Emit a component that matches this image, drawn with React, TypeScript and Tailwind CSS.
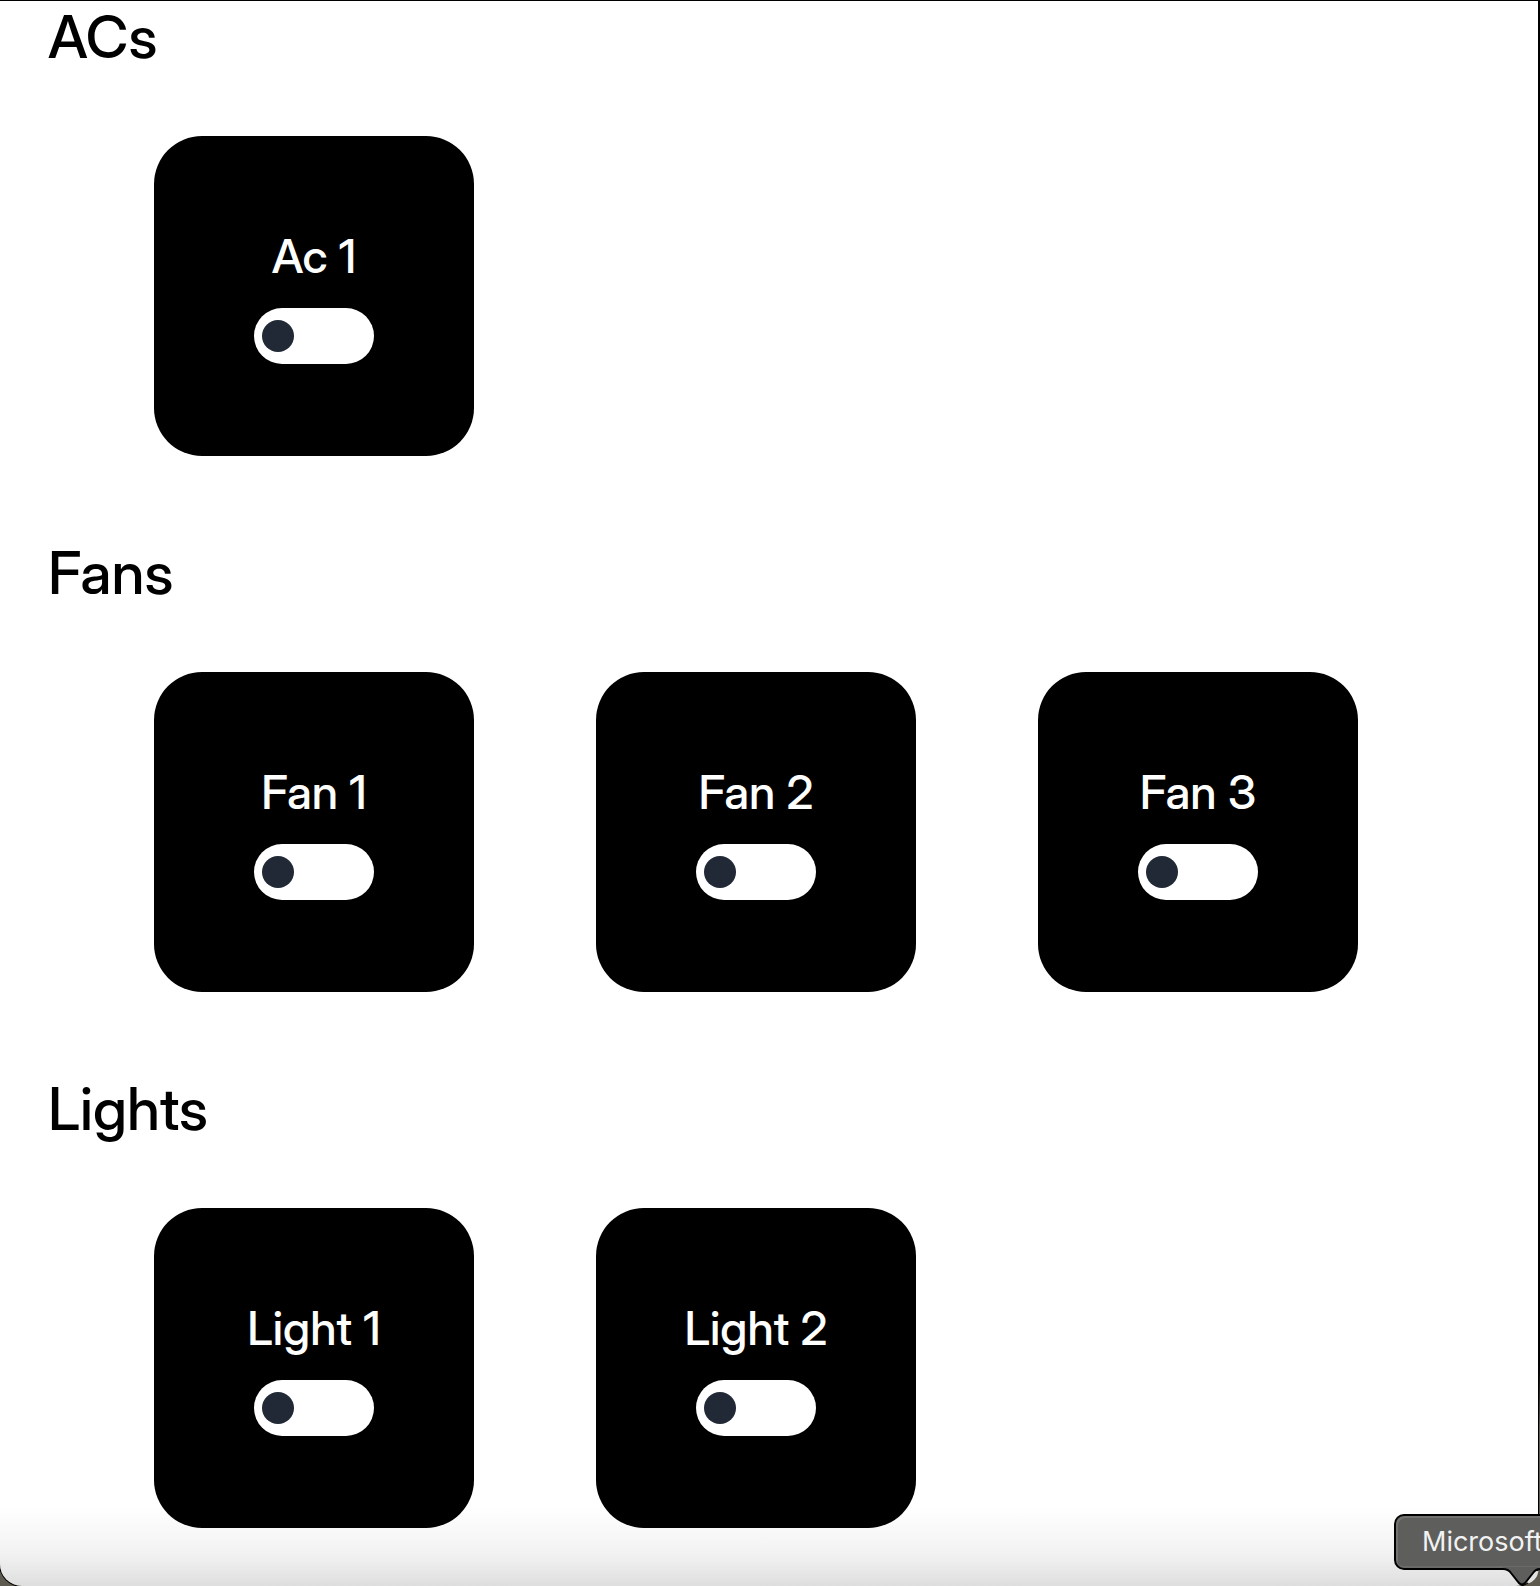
import { useState } from "react";

type Group = { title: string; devices: string[] };

const groups: Group[] = [
  { title: "ACs", devices: ["Ac 1"] },
  { title: "Fans", devices: ["Fan 1", "Fan 2", "Fan 3"] },
  { title: "Lights", devices: ["Light 1", "Light 2"] },
];

function DeviceCard({ name }: { name: string }) {
  const [on, setOn] = useState(false);
  return (
    <label className="flex size-80 cursor-pointer flex-col items-center gap-7 rounded-[48px] bg-black pt-24 text-white">
      <span className="text-[47px] leading-[48px]">{name}</span>
      <input
        type="checkbox"
        role="switch"
        checked={on}
        onChange={(e) => setOn(e.target.checked)}
        className="flex h-14 w-[120px] cursor-pointer appearance-none items-center rounded-full bg-white px-2 before:size-8 before:rounded-full before:bg-[#222936] checked:justify-end"
      />
    </label>
  );
}

function DeviceGroup({ title, devices }: Group) {
  return (
    <section>
      <h2 className="pl-12 text-[59px] leading-[60px]">{title}</h2>
      <div className="mt-[69px] flex flex-wrap gap-x-[122px] gap-y-16 pl-[154px]">
        {devices.map((name) => (
          <DeviceCard key={name} name={name} />
        ))}
      </div>
    </section>
  );
}

function DockTooltip() {
  return (
    <div className="absolute right-0 bottom-0 w-[146px] overflow-hidden pb-4">
      <div className="rounded-l-[10px] border-y-2 border-l-2 border-black bg-[#5e5e5c] py-2 pl-[26px] text-[27px] leading-9 whitespace-nowrap text-[#f2f2f2] shadow-[inset_2px_2px_0_0_#727270,inset_0_-2px_0_0_#6a6a68]">
        Microsoft
      </div>
      <svg className="absolute right-0 bottom-0 h-[19px] w-10" viewBox="0 0 40 19" aria-hidden="true">
        <path d="M3 0v2c4 0 6 1 8 4l8 10c2 2 4 2 6 0l8-10c2-3 4-4 7-4V0z" fill="#5e5e5c" />
        <path d="M28 15c4-1 8-5 9-11" fill="none" stroke="#e4e4e4" strokeWidth="3" />
        <path d="M0 2h3c4 0 6 1 8 4l8 10c2 2 4 2 6 0l8-10c2-3 4-4 7-4" fill="none" stroke="#000" strokeWidth="2" />
      </svg>
    </div>
  );
}

export default function App() {
  return (
    <div className="relative flex min-h-screen flex-col overflow-hidden bg-linear-to-b from-black from-85% to-[#5f5a50] to-90% pr-0.5 font-['Inter',sans-serif] text-black">
      <main className="flex grow flex-col gap-[87px] rounded-b-[22px] border-t border-black bg-[linear-gradient(to_top,#dedede,#f2f2f2_32px,#ffffff_80px)] pt-1.5 font-['Inter_Display','Inter',sans-serif] font-medium shadow-[0_0_0_1px_#000]">
        {groups.map((group) => (
          <DeviceGroup key={group.title} {...group} />
        ))}
      </main>
      <DockTooltip />
    </div>
  );
}
